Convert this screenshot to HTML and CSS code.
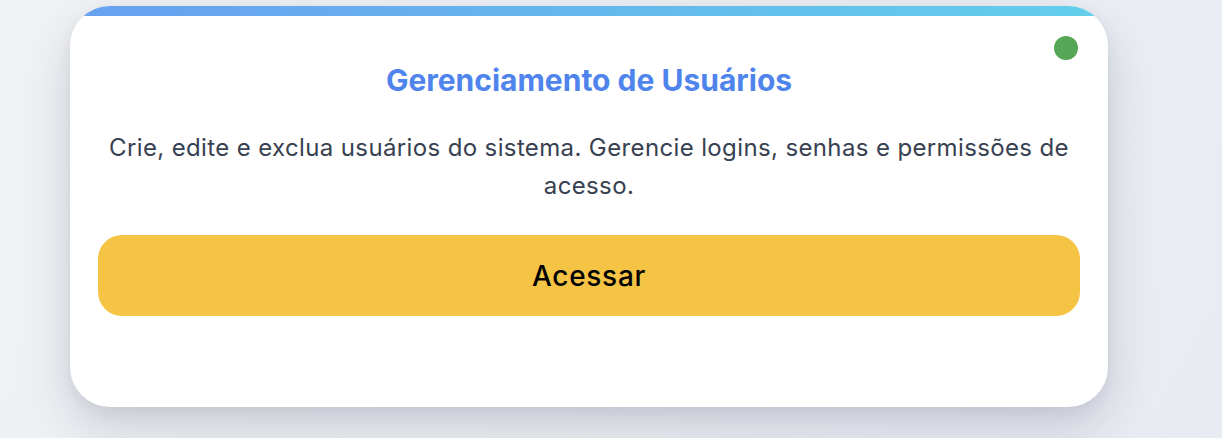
FILE: index.html
```html
<!DOCTYPE html>
<html lang="pt-BR">
<head>
<meta charset="utf-8">
<title>Gerenciamento de Usuários</title>
<link rel="stylesheet" href="styles.css">
</head>
<body>
<main class="page">
  <section class="card">
    <span class="status-dot" aria-label="online"></span>
    <h2 class="card-title">Gerenciamento de Usuários</h2>
    <p class="card-text">Crie, edite e exclua usuários do sistema. Gerencie logins, senhas e permissões de acesso.</p>
    <button class="card-button" type="button">Acessar</button>
  </section>
</main>
</body>
</html>
```
FILE: styles.css
```css
* { box-sizing: border-box; }
html, body { margin: 0; height: 100%; }
body {
  font-family: Inter, "Noto Sans", sans-serif;
  background: linear-gradient(120deg, #f0f2f5 0%, #eceff3 50%, #e8ebf2 100%);
  overflow: hidden;
}
.page {
  padding: 6px 0 0 70px;
}
.card {
  position: relative;
  width: 1038px;
  height: 401px;
  background: #ffffff;
  border-radius: 40px;
  overflow: hidden;
  padding: 54px 28px 0;
  display: flex;
  flex-direction: column;
  align-items: center;
  box-shadow: 0 22px 50px rgba(30, 40, 70, 0.16), 0 6px 16px rgba(30, 40, 70, 0.06);
}
.card::before {
  content: "";
  position: absolute;
  left: 0; top: 0; right: 0;
  height: 10px;
  background: linear-gradient(90deg, #68a0f0 0%, #62cfea 100%);
}
.status-dot {
  position: absolute;
  top: 30px;
  right: 30px;
  width: 24px;
  height: 24px;
  border-radius: 50%;
  background: #55a655;
}
.card-title {
  margin: 0;
  font-size: 30px;
  font-weight: 700;
  line-height: 40px;
  color: #4f84ec;
}
.card-text {
  margin: 29px 0 0;
  font-size: 24px;
  line-height: 38px;
  color: #374151;
  text-align: center;
  letter-spacing: 0.37px;
}
.card-button {
  margin-top: 30px;
  width: 100%;
  height: 81px;
  flex-shrink: 0;
  border: none;
  border-radius: 24px;
  background: #f6c445;
  color: #000;
  font-family: Inter, "Noto Sans", sans-serif;
  font-size: 28px;
  font-weight: 500;
  letter-spacing: 0.7px;
  padding-left: 6px;
}
```
